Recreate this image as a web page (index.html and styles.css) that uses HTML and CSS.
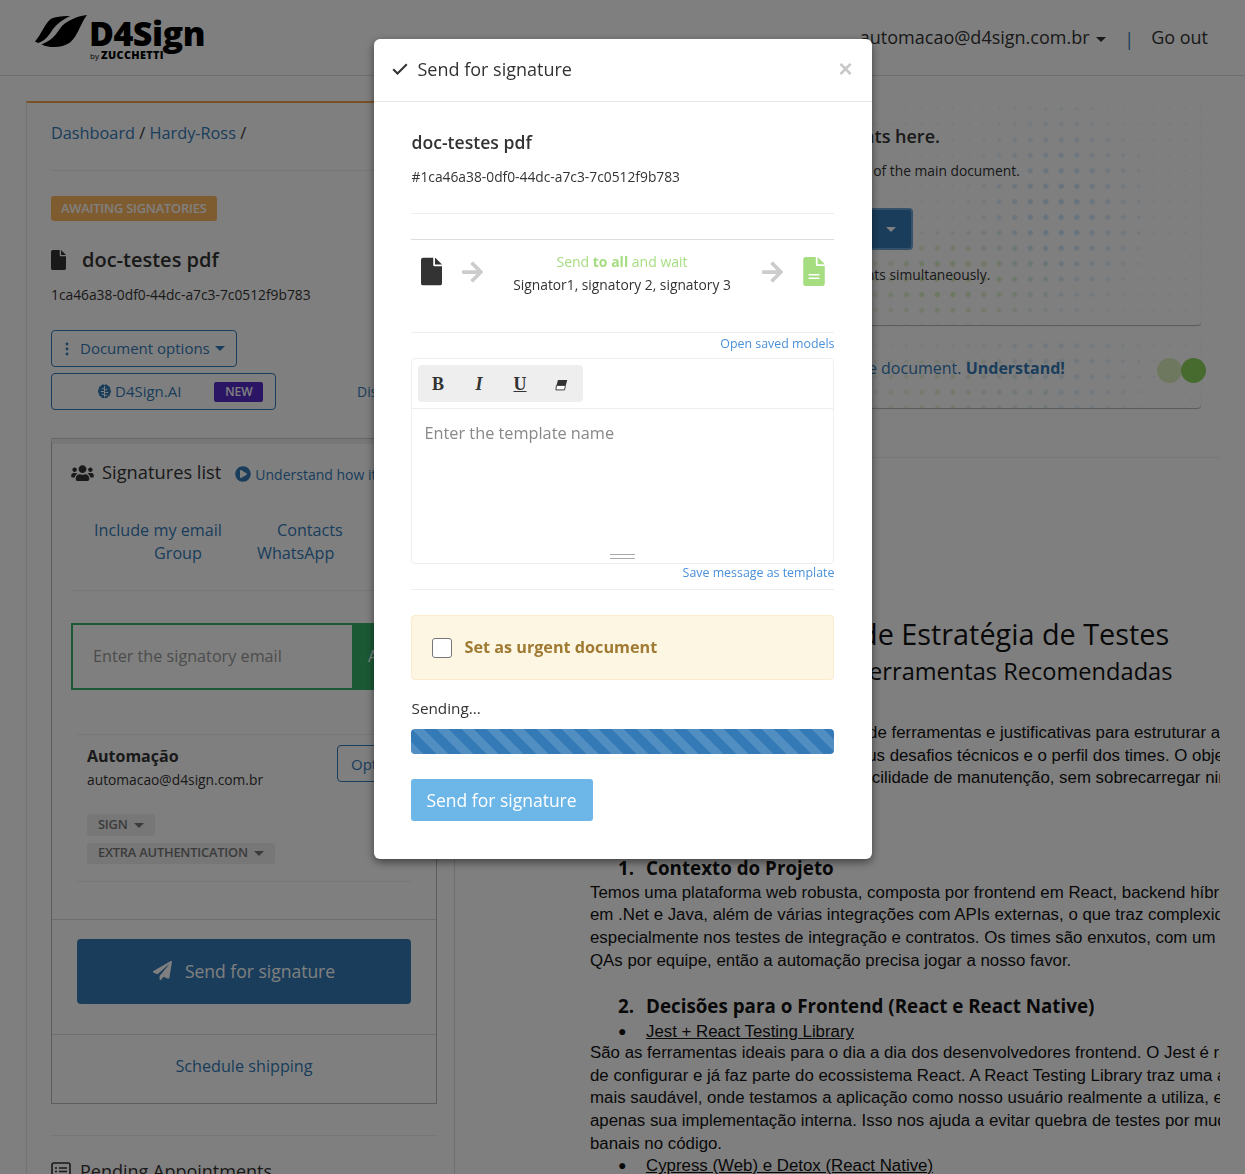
FILE: index.html
```html
<!DOCTYPE html>
<html lang="en">
<head>
    <meta charset="UTF-8">
    <meta name="viewport" content="width=device-width, initial-scale=1.0">
    <title>D4Sign - Send for signature</title>
    <link rel="stylesheet" href="styles.css">
</head>
<body>
    <header class="topbar">
        <div class="logo">
            <svg class="logo-leaf" viewBox="0 0 52 33">
                <path d="M35 1C29 .6 21 1.500 16.500 3.500 10.500 7 6 20 0 26.500l3 1.500C10.500 26 14 20 18 14 22 8.500 28 4.500 35 1z"/>
                <path d="M52 0C43 1 33 5 27 11 22.500 16 20.500 24 6.500 29.500 16 33.500 27 33 35 27.500 43 21 45 9 52 0z"/>
            </svg>
            <div class="logo-text">
                <span class="logo-name">D4Sign</span>
                <span class="logo-by"><small>by</small>ZUCCHETTI</span>
            </div>
        </div>
        <nav class="topnav">
            <span class="topnav-user">automacao@d4sign.com.br <i class="caret"></i></span>
            <span class="topnav-sep">|</span>
            <span>Go out</span>
        </nav>
    </header>

    <main class="page">
        <section class="side">
            <p class="crumbs"><a>Dashboard</a> / <a>Hardy-Ross</a> /</p>
            <span class="status-badge">AWAITING SIGNATORIES</span>
            <h2 class="doc-title">
                <svg class="doc-title-icon" viewBox="0 0 384 512"><use href="#file-icon"/></svg>
                doc-testes pdf
            </h2>
            <p class="doc-id">1ca46a38-0df0-44dc-a7c3-7c0512f9b783</p>
            <div class="btn-line">
                <a class="btn-outline btn-options">
                    <svg class="kebab" viewBox="0 0 4 14"><circle cx="2" cy="2" r="1.4"/><circle cx="2" cy="7" r="1.4"/><circle cx="2" cy="12" r="1.4"/></svg>
                    <span class="btn-label">Document options</span> <i class="caret"></i>
                </a>
            </div>
            <div class="ai-line">
                <a class="btn-outline btn-ai">
                    <svg class="brain" viewBox="0 0 16 16">
                        <path d="M8 1C6.600 0 4.600.6 4.200 2 2.600 2.200 1.600 3.700 2 5.200.6 6.200.6 9 2 10c-.3 1.600.8 3.200 2.200 3.400C4.800 15 6.800 15.600 8 14.600 9.200 15.600 11.200 15 11.800 13.400 13.200 13.200 14.300 11.600 14 10c1.400-1 1.400-3.800 0-4.800C14.400 3.700 13.400 2.200 11.800 2 11.400.6 9.400 0 8 1z"/>
                        <path class="brain-line" d="M8 2v12M5 5h3M4 8h4M5 11h3M8 6h3M8 9h4M8 12h3"/>
                    </svg>
                    <span class="btn-label">D4Sign.AI</span>
                    <span class="new-badge">NEW</span>
                </a>
                <a class="ai-other">Display</a>
            </div>

            <div class="sig-box">
                <div class="sig-head">
                    <svg class="users-icon" viewBox="0 0 640 512"><path d="M96 224c35.300 0 64-28.700 64-64s-28.700-64-64-64-64 28.700-64 64 28.700 64 64 64zm448 0c35.300 0 64-28.700 64-64s-28.700-64-64-64-64 28.700-64 64 28.700 64 64 64zm32 32h-64c-17.600 0-33.500 7.100-45.100 18.600 40.300 22.100 68.900 62 75.100 109.400h66c17.700 0 32-14.300 32-32v-32c0-35.300-28.700-64-64-64zm-256 0c61.900 0 112-50.100 112-112S381.900 32 320 32 208 82.100 208 144s50.100 112 112 112zm76.800 32h-8.300c-20.800 10-43.900 16-68.500 16s-47.600-6-68.500-16h-8.300C179.600 288 128 339.600 128 403.200V432c0 26.500 21.500 48 48 48h288c26.500 0 48-21.500 48-48v-28.800c0-63.600-51.600-115.200-115.200-115.200zm-223.700-13.400C161.500 263.100 145.600 256 128 256H64c-35.300 0-64 28.700-64 64v32c0 17.700 14.300 32 32 32h65.900c6.300-47.400 34.900-87.300 75.200-109.400z"/></svg>
                    <h3 class="sig-title">Signatures list</h3>
                    <a class="sig-help">
                        <svg class="play-icon" viewBox="0 0 512 512"><path d="M256 8C119 8 8 119 8 256s111 248 248 248 248-111 248-248S393 8 256 8zm115.700 272l-176 101c-15.800 8.800-35.700-2.500-35.700-20.900V152c0-18.300 19.800-29.800 35.700-20.900l176 107c16.400 9.200 16.400 32.900 0 41.900z"/></svg>
                        Understand how it works
                    </a>
                </div>
                <div class="sig-links sig-links-a"><a>Include my email</a><a>Contacts</a></div>
                <div class="sig-links sig-links-b"><a>Group</a><a>WhatsApp</a></div>
                <hr class="line sig-line">
                <div class="add-row">
                    <div class="add-input">Enter the signatory email</div>
                    <div class="add-btn">Add</div>
                </div>
                <div class="signer">
                    <div class="signer-top">
                        <div>
                            <div class="signer-name">Automação</div>
                            <div class="signer-mail">automacao@d4sign.com.br</div>
                        </div>
                        <a class="btn-outline btn-signer">Options</a>
                    </div>
                    <div class="signer-tag tag-first">SIGN <i class="caret"></i></div>
                    <div class="signer-tag tag-second">EXTRA AUTHENTICATION <i class="caret"></i></div>
                </div>
                <div class="send-area">
                    <a class="btn-send">
                        <svg class="plane-icon" viewBox="0 0 512 512"><path d="M476 3.200L12.500 270.600c-18.100 10.400-15.800 35.600 2.200 43.200L121 358.400l287.300-253.200c5.500-4.900 13.300 2.600 8.600 8.300L176 407v80.500c0 23.600 28.500 32.900 42.500 15.800L282 426l124.600 52.200c14.200 6 30.400-2.900 33-18.200l72-432C515 7.800 493.300-6.800 476 3.200z"/></svg>
                        Send for signature
                    </a>
                </div>
                <a class="schedule">Schedule shipping</a>
            </div>
            <hr class="line side-end">
            <h3 class="pending">
                <svg class="list-icon" viewBox="0 0 20 18">
                    <rect x="1" y="1" width="18" height="16" rx="2"/>
                    <path d="M4 6h2M8 6h8M4 9.500h2M8 9.500h8M4 13h2M8 13h8"/>
                </svg>
                Pending Appointments
            </h3>
        </section>

        <section class="content">
            <div class="info-card">
                <h3 class="info-title">Add attachments here.</h3>
                <p class="info-text">Add many other files as annexes of the main document.</p>
                <a class="btn-split"><span>Add</span> <i class="caret caret-light"></i></a>
                <p class="info-text info-bottom">Upload up to 100 attachments simultaneously.</p>
            </div>
            <div class="info-card info-card-small">
                <p class="info-link">You can add observers to follow the document. <b>Understand!</b></p>
                <span class="dot dot-light"></span>
                <span class="dot dot-dark"></span>
            </div>
            <hr class="line content-line">

            <div class="viewer">
                <article class="pdf">
                    <h1 class="pdf-title">Documento de Estratégia de Testes</h1>
                    <h2 class="pdf-subtitle">Proposta de Ferramentas Recomendadas</h2>
                    <p class="pdf-text pdf-intro">Este documento apresenta uma lista de ferramentas e justificativas para estruturar a<br>automação da empresa, dados os seus desafios técnicos e o perfil dos times. O objetivo é<br>equilibrar a cobertura, velocidade e facilidade de manutenção, sem sobrecarregar ninguém.</p>
                    <h3 class="pdf-head pdf-head-one"><span>1.</span>Contexto do Projeto</h3>
                    <p class="pdf-text">Temos uma plataforma web robusta, composta por frontend em React, backend híbrido<br>em .Net e Java, além de várias integrações com APIs externas, o que traz complexidade,<br>especialmente nos testes de integração e contratos. Os times são enxutos, com um ou dois<br>QAs por equipe, então a automação precisa jogar a nosso favor.</p>
                    <h3 class="pdf-head pdf-head-two"><span>2.</span>Decisões para o Frontend (React e React Native)</h3>
                    <div class="pdf-item"><span>●</span><u>Jest + React Testing Library</u></div>
                    <p class="pdf-text">São as ferramentas ideais para o dia a dia dos desenvolvedores frontend. O Jest é rápido, fácil<br>de configurar e já faz parte do ecossistema React. A React Testing Library traz uma abordagem<br>mais saudável, onde testamos a aplicação como nosso usuário realmente a utiliza, e não<br>apenas sua implementação interna. Isso nos ajuda a evitar quebra de testes por mudanças<br>banais no código.</p>
                    <div class="pdf-item"><span>●</span><u>Cypress (Web) e Detox (React Native)</u></div>
                </article>
            </div>
        </section>
    </main>

    <svg class="defs" width="0" height="0">
        <symbol id="file-icon" viewBox="0 0 384 512">
            <path d="M0 48Q0 0 48 0H224V136Q224 160 248 160H384V464Q384 512 336 512H48Q0 512 0 464Z"/>
            <path d="M256 0L384 128H256Z"/>
        </symbol>
        <symbol id="arrow-icon" viewBox="0 0 448 512">
            <path d="M190.500 66.900l22.200-22.200c9.400-9.400 24.600-9.400 33.900 0L441 239c9.400 9.400 9.400 24.600 0 33.900L246.600 467.300c-9.400 9.400-24.600 9.400-33.900 0l-22.200-22.200c-9.500-9.500-9.300-25 .4-34.300L311.400 296H24c-13.300 0-24-10.700-24-24v-32c0-13.300 10.700-24 24-24h287.400L190.900 101.200c-9.800-9.300-10-24.800-.4-34.300z"/>
        </symbol>
    </svg>

    <div class="overlay">
        <div class="modal">
            <div class="modal-head">
                <svg class="check-icon" viewBox="0 0 16 12"><path d="M1.200 6.200l4.300 4.300L14.800 1.200"/></svg>
                <h4 class="modal-title">Send for signature</h4>
                <span class="modal-close">×</span>
            </div>
            <div class="modal-body">
                <h3 class="modal-doc">doc-testes pdf</h3>
                <p class="modal-id">#1ca46a38-0df0-44dc-a7c3-7c0512f9b783</p>
                <hr class="line modal-line-a">
                <div class="flow">
                    <svg class="flow-doc" viewBox="0 0 384 512"><use href="#file-icon"/></svg>
                    <svg class="flow-arrow" viewBox="0 0 448 512"><use href="#arrow-icon"/></svg>
                    <div class="flow-text">
                        <div class="flow-green">Send <b>to all</b> and wait</div>
                        <div>Signator1, signatory 2, signatory 3</div>
                    </div>
                    <svg class="flow-arrow" viewBox="0 0 448 512"><use href="#arrow-icon"/></svg>
                    <svg class="flow-done" viewBox="0 0 384 512">
                        <use href="#file-icon"/>
                        <path class="flow-done-lines" d="M96 300h192v26H96zM96 364h192v26H96z"/>
                    </svg>
                </div>
                <a class="small-link">Open saved models</a>
                <div class="editor">
                    <div class="editor-bar">
                        <div class="editor-tools">
                            <span class="tool tool-b">B</span>
                            <span class="tool tool-i">I</span>
                            <span class="tool tool-u">U</span>
                            <span class="tool">
                                <svg class="eraser" viewBox="0 0 14 12">
                                    <path d="M3.200.6h10L11.700 6H1.700z"/>
                                    <path class="eraser-low" d="M1.500 6.500h9.800l-1.100 4.800H1z"/>
                                </svg>
                            </span>
                        </div>
                    </div>
                    <div class="editor-area">Enter the template name</div>
                    <div class="editor-grip"></div>
                </div>
                <a class="small-link small-link-save">Save message as template</a>
                <hr class="line modal-line-b">
                <label class="urgent">
                    <span class="urgent-box"></span>
                    Set as urgent document
                </label>
                <p class="sending">Sending...</p>
                <div class="progress"></div>
                <a class="btn-modal">Send for signature</a>
            </div>
        </div>
    </div>
</body>
</html>
```

FILE: styles.css
```css
* {
    box-sizing: border-box;
}

html, body {
    height: 100%;
}

body {
    margin: 0;
    overflow: hidden;
    background-color: #fff;
    color: #333;
    font-family: "Open Sans", sans-serif;
    font-size: 14px;
}

a {
    color: #337ab7;
}

p, h1, h2, h3, h4 {
    margin: 0;
}

.line {
    display: block;
    margin: 0;
    border: 0;
    border-top: 1px solid #eee;
}

.caret {
    display: inline-block;
    width: 0;
    height: 0;
    margin-left: 2px;
    vertical-align: middle;
    border-top: 5px solid;
    border-right: 5px solid transparent;
    border-left: 5px solid transparent;
}

.caret-light {
    color: #fff;
}

.defs {
    position: absolute;
}

/* topo */
.topbar {
    display: flex;
    justify-content: space-between;
    height: 76px;
    padding: 0 37px 0 35px;
    border-bottom: 1px solid #ddd;
}

.logo {
    display: flex;
    align-items: flex-start;
    gap: 2px;
    padding-top: 15px;
}

.logo-leaf {
    width: 52px;
    height: 33px;
    fill: #000;
}

.logo-text {
    display: flex;
    flex-direction: column;
    color: #000;
}

.logo-name {
    margin-top: 1px;
    font-size: 34px;
    font-weight: 800;
    letter-spacing: -0.5px;
    line-height: 34px;
}

.logo-by {
    margin: 1px 0 0 1px;
    font-size: 10.8px;
    font-weight: 800;
    line-height: 8px;
    letter-spacing: 0.4px;
}

.logo-by small {
    margin-right: 2px;
    font-size: 8px;
    font-weight: 400;
    letter-spacing: 0;
}

.topnav {
    display: flex;
    padding-top: 25px;
    font-size: 18px;
    line-height: 24px;
}

.topnav-sep {
    margin: 2px 17px 0 18px;
    color: #337ab7;
}

/* pagina */
.page {
    display: flex;
    align-items: flex-start;
    padding: 25px 0 0 26px;
}

.side {
    width: 429px;
    height: 1100px;
    padding: 0 17px 0 24px;
    border-top: 2px solid #f0a54a;
    border-left: 1px solid #e6e6e6;
    border-right: 1px solid #ddd;
}

.crumbs {
    height: 49px;
    margin-top: 19px;
    border-bottom: 1px solid #eee;
    font-size: 16.3px;
    line-height: 22px;
}

.status-badge {
    display: block;
    width: 166px;
    height: 25px;
    margin-top: 25px;
    padding-left: 10px;
    border-radius: 3px;
    background-color: #ffb861;
    color: #fff;
    font-size: 12.85px;
    font-weight: 600;
    line-height: 25px;
    letter-spacing: -0.2px;
}

.doc-title {
    display: flex;
    align-items: center;
    gap: 16px;
    margin-top: 25px;
    font-size: 20px;
    font-weight: 600;
    line-height: 28px;
}

.doc-title-icon {
    width: 15px;
    height: 20px;
    fill: #333;
}

.doc-id {
    margin-top: 11px;
    font-size: 13.8px;
    line-height: 20px;
}

.btn-line {
    margin-top: 25px;
}

.btn-outline {
    display: inline-flex;
    align-items: center;
    height: 37px;
    border: 1px solid #337ab7;
    border-radius: 4px;
    font-size: 15px;
}

.btn-label {
    margin-top: -2px;
}

.btn-options {
    gap: 11px;
    width: 186px;
    padding-left: 13px;
}

.btn-options .caret {
    margin-left: -6px;
}

.kebab {
    width: 4px;
    height: 14px;
    fill: #337ab7;
}

.ai-line {
    display: flex;
    align-items: center;
    gap: 81px;
    margin-top: 6px;
}

.btn-ai {
    width: 225px;
    padding-left: 45px;
    gap: 3px;
}

.brain {
    width: 15px;
    height: 15px;
    fill: #337ab7;
}

.brain-line {
    fill: none;
    stroke: #fff;
    stroke-width: 1;
}

.new-badge {
    width: 49px;
    height: 20px;
    margin-left: 30px;
    border-radius: 2px;
    background-color: #572dcc;
    color: #fff;
    font-size: 12px;
    font-weight: 600;
    line-height: 20px;
    text-align: center;
}

.ai-other {
    font-size: 14px;
}

/* lista de assinaturas */
.sig-box {
    width: 386px;
    height: 665px;
    margin-top: 29px;
    border: 1px solid #bbb;
    border-top: 5px solid #eee;
    box-shadow: 0 -1px 0 #ccc;
}

.sig-head {
    display: flex;
    align-items: center;
    height: 57px;
    padding: 0 0 0 19px;
    white-space: nowrap;
}

.users-icon {
    width: 23px;
    height: 18px;
    fill: #333;
}

.sig-title {
    margin: -2px 0 0 8px;
    font-size: 18.3px;
    font-weight: 500;
}

.sig-help {
    display: flex;
    align-items: center;
    gap: 4px;
    margin: 3px 0 0 14px;
    font-size: 14px;
}

.play-icon {
    width: 16px;
    height: 16px;
    fill: #337ab7;
}

.sig-links {
    display: flex;
    gap: 55px;
    font-size: 16.2px;
    line-height: 23px;
}

.sig-links-a {
    margin-top: 18px;
    padding-left: 42px;
}

.sig-links-b {
    padding-left: 102px;
}

.sig-line {
    margin: 25px 19px 0;
}

.add-row {
    display: flex;
    height: 67px;
    margin: 32px 19px 0;
    white-space: nowrap;
}

.add-input {
    width: 281px;
    padding-left: 20px;
    border: 2px solid #36b36a;
    border-right: 0;
    color: #999;
    font-size: 16.2px;
    line-height: 63px;
}

.add-btn {
    flex: 1;
    padding-left: 16px;
    background-color: #36b36a;
    color: #fff;
    font-size: 16px;
    line-height: 67px;
}

.signer {
    height: 148px;
    margin: 44px 25px 0;
    padding: 10px 10px 0;
    border-top: 1px solid #eee;
    border-bottom: 1px solid #eee;
}

.signer-top {
    display: flex;
    justify-content: space-between;
    align-items: flex-start;
}

.signer-name {
    font-size: 16px;
    font-weight: 700;
    line-height: 22px;
}

.signer-mail {
    font-size: 13.8px;
    line-height: 26px;
}

.btn-signer {
    width: 64px;
    padding-left: 13px;
}

.signer-tag {
    display: table;
    height: 22px;
    padding: 0 11px;
    border-radius: 3px;
    background-color: #eee;
    color: #777;
    font-size: 12.85px;
    font-weight: 600;
    line-height: 20px;
    letter-spacing: -0.2px;
}

.signer-tag .caret {
    margin-left: 3px;
}

.tag-first {
    margin-top: 21px;
}

.tag-second {
    height: 21px;
    margin-top: 7px;
    line-height: 18px;
}

.send-area {
    height: 116px;
    margin-top: 37px;
    padding: 19px 25px 0;
    border-top: 1px solid #ddd;
    border-bottom: 1px solid #ddd;
}

.btn-send {
    display: flex;
    justify-content: center;
    align-items: center;
    gap: 13px;
    height: 65px;
    padding-bottom: 2px;
    border-radius: 4px;
    background-color: #337ab7;
    color: #fff;
    font-size: 17.5px;
}

.plane-icon {
    width: 19px;
    height: 19px;
    fill: #fff;
}

.schedule {
    display: block;
    font-size: 16.2px;
    line-height: 62px;
    text-align: center;
}

.side-end {
    margin-top: 31px;
    width: 386px;
}

.pending {
    display: flex;
    align-items: center;
    gap: 9px;
    margin-top: 22px;
    font-size: 18px;
    font-weight: 500;
    line-height: 26px;
}

.list-icon {
    width: 20px;
    height: 18px;
    fill: none;
    stroke: #333;
    stroke-width: 1.6;
}

/* coluna do documento */
.content {
    width: 790px;
    flex-shrink: 0;
    padding: 0 25px;
}

.info-card {
    position: relative;
    width: 721px;
    height: 224px;
    padding-top: 22px;
    border-radius: 4px;
    box-shadow: 0 1px 1px rgba(0, 0, 0, 0.3);
    background-color: #fff;
    background-image: radial-gradient(circle, #eef0f2 1px, transparent 1.5px);
    background-size: 15.5px 15.5px;
    text-align: center;
}

.info-card > * {
    position: relative;
    z-index: 1;
}

.info-card::before,
.info-card::after {
    content: "";
    position: absolute;
    top: 0;
    right: 0;
    bottom: 0;
    left: 0;
    background-size: 15.5px 15.5px;
}

.info-card::before {
    background-image: radial-gradient(circle, #cfe6fb 2.4px, transparent 3px);
    -webkit-mask-image: radial-gradient(ellipse 100px 120px at 80% 50%, #000 25%, transparent 100%);
    mask-image: radial-gradient(ellipse 100px 120px at 80% 50%, #000 25%, transparent 100%);
}

.info-card::after {
    background-image: radial-gradient(circle, #d8f0c0 2.4px, transparent 3px);
    -webkit-mask-image: radial-gradient(ellipse 120px 60px at 65% 80%, #000 20%, transparent 100%);
    mask-image: radial-gradient(ellipse 120px 60px at 65% 80%, #000 20%, transparent 100%);
}

.info-title {
    font-size: 18px;
    font-weight: 600;
    line-height: 26px;
}

.info-text {
    margin-top: 12px;
    font-size: 13.8px;
    line-height: 20px;
}

.info-bottom {
    margin-top: 15px;
}

.btn-split {
    display: flex;
    justify-content: space-between;
    align-items: center;
    width: 144px;
    height: 42px;
    margin: 27px auto 0;
    padding: 0 15px 0 20px;
    border: 2px solid #6ca4d6;
    border-radius: 4px;
    background-color: #337ab7;
    color: #fff;
    font-size: 15px;
}

.info-card-small {
    height: 70px;
    margin-top: 13px;
    padding: 17px 6px 0 0;
}

.info-card-small::before,
.info-card-small::after {
    opacity: 0.5;
}

.info-link {
    color: #337ab7;
    font-size: 16px;
    line-height: 26px;
}

.info-card > .dot {
    position: absolute;
    top: 20px;
    width: 25px;
    height: 25px;
    border-radius: 50%;
}

.info-card > .dot-light {
    right: 19px;
    background-color: #dcf0bd;
}

.info-card > .dot-dark {
    right: -5px;
    background-color: #8ed65f;
}

.content-line {
    width: 740px;
    margin-top: 49px;
}

.viewer {
    width: 740px;
    height: 720px;
    overflow: hidden;
}

.pdf {
    width: 656px;
    margin-left: 110px;
    color: #111;
}

.pdf-title {
    margin-top: 159px;
    padding-left: 28px;
    font-size: 28.8px;
    font-weight: 500;
    line-height: 34px;
    text-align: center;
    white-space: nowrap;
}

.pdf-subtitle {
    margin-top: 5px;
    padding-left: 54px;
    font-size: 23.6px;
    font-weight: 400;
    line-height: 30px;
    text-align: center;
    white-space: nowrap;
}

.pdf-text {
    font-family: "Liberation Sans", Arial, sans-serif;
    font-size: 16.85px;
    line-height: 22.6px;
    white-space: nowrap;
}

.pdf-intro {
    margin-top: 36px;
}

.pdf-head {
    display: flex;
    padding-left: 28px;
    font-size: 18.8px;
    font-weight: 700;
    line-height: 24px;
}

.pdf-head span {
    width: 28px;
}

.pdf-head-one {
    margin-top: 66px;
    margin-bottom: 2px;
}

.pdf-head-two {
    margin-top: 22px;
    margin-bottom: 3px;
}

.pdf-item {
    display: flex;
    padding-left: 28px;
    font-family: "Liberation Sans", Arial, sans-serif;
    font-size: 16.85px;
    line-height: 21px;
}

.pdf-item span {
    width: 28px;
    font-size: 14px;
}

/* modal */
.overlay {
    position: fixed;
    top: 0;
    right: 0;
    bottom: 0;
    left: 0;
    z-index: 5;
    background-color: rgba(0, 0, 0, 0.5);
}

.modal {
    width: 498px;
    height: 820px;
    margin: 39px auto 0;
    border-radius: 6px;
    background-color: #fff;
    box-shadow: 0 3px 9px rgba(0, 0, 0, 0.5);
}

.modal-head {
    display: flex;
    align-items: center;
    height: 63px;
    padding: 0 19px 2px 18px;
    border-bottom: 1px solid #e5e5e5;
}

.check-icon {
    width: 16px;
    height: 12px;
    fill: none;
    stroke: #333;
    stroke-width: 2;
}

.modal-title {
    flex: 1;
    margin-left: 10px;
    font-size: 18px;
    font-weight: 500;
}

.modal-close {
    color: #c8c8c8;
    font-family: "Liberation Sans", Arial, sans-serif;
    font-size: 24px;
    font-weight: 700;
}

.modal-body {
    padding: 0 38px 0 37px;
}

.modal-doc {
    margin: 27px 0 0 1px;
    font-size: 17.6px;
    font-weight: 600;
    line-height: 26px;
}

.modal-id {
    margin: 12px 0 0 1px;
    font-size: 13.8px;
    line-height: 20px;
}

.modal-line-a {
    margin-top: 26px;
}

.flow {
    display: flex;
    align-items: center;
    height: 94px;
    margin-top: 25px;
    padding: 0 9px 0 10px;
    border-top: 1px solid #ddd;
    border-bottom: 1px solid #eee;
}

.flow-doc {
    width: 21px;
    height: 29px;
    margin-top: -29px;
    fill: #333;
}

.flow-arrow {
    width: 23px;
    height: 24px;
    margin: -29px 0 0 19px;
    fill: #ccc;
}

.flow-text {
    flex: 1;
    margin-top: -27px;
    font-size: 13.8px;
    line-height: 23px;
    text-align: center;
}

.flow-green {
    color: #a5dd80;
    font-size: 14px;
}

.flow-text + .flow-arrow {
    margin: -29px 19px 0 0;
}

.flow-done {
    width: 22px;
    height: 29px;
    margin-top: -29px;
    fill: #a5dd80;
}

.flow-done-lines {
    fill: #fff;
}

.small-link {
    display: block;
    margin: 1px -1px 0 0;
    color: #4a90d9;
    font-size: 12.4px;
    line-height: 20px;
    text-align: right;
}

.editor {
    position: relative;
    height: 206px;
    margin-top: 4px;
    border: 1px solid #eee;
    border-radius: 4px;
}

.editor-bar {
    height: 50px;
    padding: 6px;
    border-bottom: 1px solid #eee;
}

.editor-tools {
    display: flex;
    width: 165px;
    height: 37px;
    border-radius: 4px;
    background-color: #eee;
}

.tool {
    display: flex;
    justify-content: center;
    align-items: center;
    width: 41px;
    padding-top: 2px;
    font-family: "Liberation Serif", serif;
    font-size: 18px;
    font-weight: 700;
}

.tool-i {
    font-style: italic;
}

.tool-u {
    text-decoration: underline;
}

.eraser {
    width: 13px;
    height: 12px;
    fill: #333;
}

.eraser-low {
    fill: #fff;
    stroke: #333;
    stroke-width: 1;
}

.editor-area {
    padding: 12px 12px 0 13px;
    color: #888;
    font-size: 16.3px;
    line-height: 24px;
}

.editor-grip {
    position: absolute;
    bottom: 4px;
    left: 198px;
    width: 25px;
    height: 5px;
    border-top: 1px solid #aaa;
    border-bottom: 1px solid #aaa;
}

.small-link-save {
    margin-top: -1px;
}

.modal-line-b {
    margin-top: 6px;
}

.urgent {
    display: flex;
    align-items: center;
    gap: 13px;
    height: 65px;
    margin-top: 25px;
    padding: 0 0 2px 20px;
    border: 1px solid #faebcc;
    border-radius: 4px;
    background-color: #fcf6e3;
    color: #a07a33;
    font-size: 16.2px;
    font-weight: 700;
}

.urgent-box {
    width: 20px;
    height: 20px;
    margin-top: 2px;
    border: 1px solid #767676;
    border-radius: 3px;
    background-color: #fff;
}

.sending {
    margin: 17px 0 0 1px;
    font-size: 15.3px;
    font-weight: 500;
    line-height: 22px;
}

.progress {
    height: 25px;
    margin-top: 10px;
    border-radius: 4px;
    background-color: #337ab7;
    background-image: repeating-linear-gradient(45deg, rgba(255, 255, 255, 0.15) 0, rgba(255, 255, 255, 0.15) 8.84px, transparent 8.84px, transparent 17.68px);
}

.btn-modal {
    display: block;
    width: 182px;
    height: 42px;
    margin-top: 25px;
    border-radius: 3px;
    background-color: #6db6e8;
    color: #fff;
    font-size: 17.5px;
    line-height: 42px;
    text-align: center;
}
```
